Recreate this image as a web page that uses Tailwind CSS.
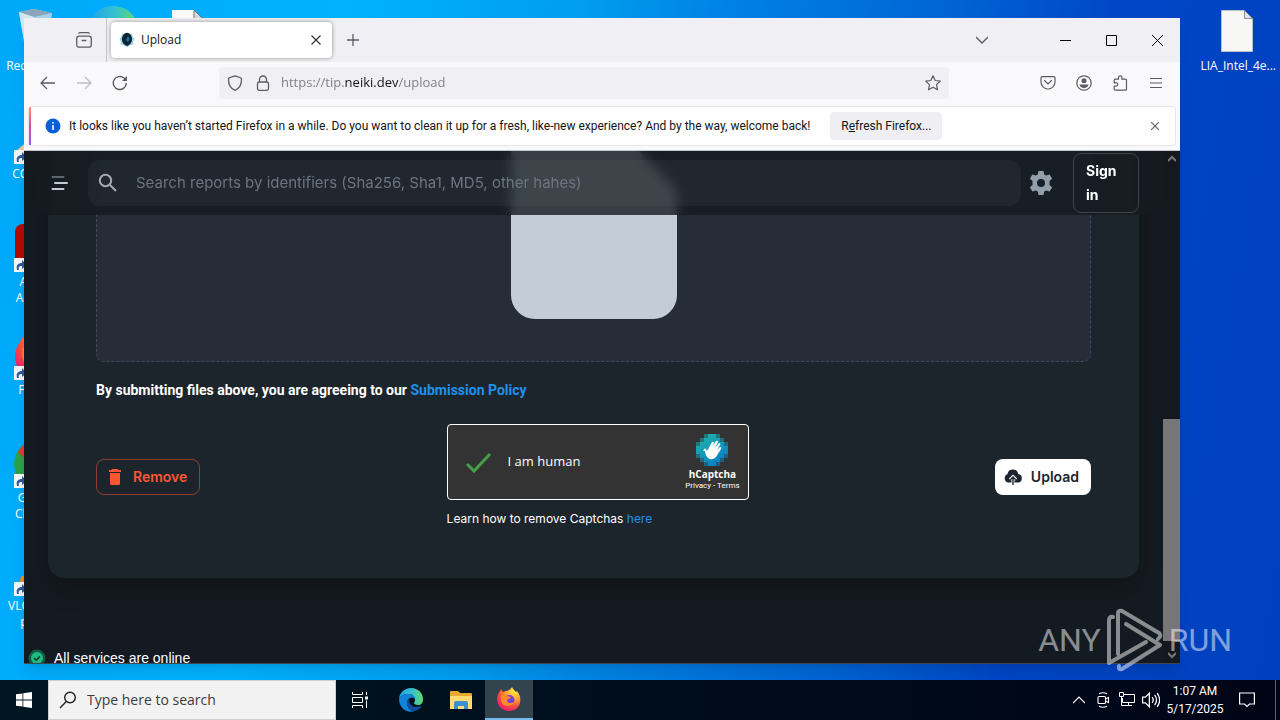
<!DOCTYPE html>
<html lang="en">
<head>
  <meta charset="UTF-8" />
  <meta name="viewport" content="width=device-width, initial-scale=1.0" />
  <title>Upload</title>
  <script src="https://cdn.jsdelivr.net/npm/@tailwindcss/browser@4"></script>
</head>
<body class="h-screen flex flex-col overflow-hidden font-['Open_Sans',sans-serif] text-xs">

  <!-- SHARED ICONS -->
  <svg class="absolute size-0" aria-hidden="true">
    <symbol id="shortcut" viewBox="0 0 14 14">
      <path d="M0 0h14v14H0z" fill="#f4f6f8" />
      <path d="M3 12C2 7 4 5 8 5V2l5 5-5 4V8C5 8 4 9 5 12z" fill="#2c5a9c" />
    </symbol>
    <symbol id="edge" viewBox="0 0 24 24">
      <linearGradient id="eg" x1="0" y1="0" x2="1" y2="0"><stop offset="0" stop-color="#1fa3e8" /><stop offset=".55" stop-color="#35c1d0" /><stop offset="1" stop-color="#5fdc6a" /></linearGradient>
      <path d="M12 0C5 0 .5 5 0 11c2-4 6-5 9-5 5 0 7 3 7 6 0 2-1 2-1 3 0 1 2 2 4 2 3 0 5-2 5-6C24 5 19 0 12 0z" fill="url(#eg)" />
      <path d="M0 11c2-4 6-5 9-5 4 0 6 2 7 5-2-2-8-2-8 4 0 5 4 8 8 8-8 3-16-3-16-12z" fill="#1283d8" />
      <path d="M8 15c0-3 1-4 2-5-1 4 2 9 7 9 2 0 4-1 5-1 1 0 0 1-1 2-2 2-4 3-6 3-4 0-7-3-7-8z" fill="#0f4f9e" />
    </symbol>
    <symbol id="firefox" viewBox="0 0 24 24">
      <radialGradient id="fg" cx=".75" cy=".15" r=".95"><stop offset="0" stop-color="#fff04a" /><stop offset=".4" stop-color="#ffa02e" /><stop offset=".7" stop-color="#ff4a3f" /><stop offset="1" stop-color="#e3197a" /></radialGradient>
      <path d="M15 0c1 2 2 3 4 5l1-1c3 4 4 7 3 12-1 5-6 8-11 8C5 24 0 19 0 12c0-3 1-5 3-8l1-2 2 3 3-1c1 0 4-1 6-4z" fill="url(#fg)" />
      <circle cx="12.500" cy="13" r="5" fill="#7a3fe0" />
      <path d="M4 8c2-2 5-1 6 1l4 1c0 1-2 2-4 3 0 3 4 4 7 2-2 4-5 4-7 4-4 0-7-4-6-11z" fill="#ff8a2b" />
    </symbol>
  </svg>

  <!-- DESKTOP -->
  <main class="relative flex-1 overflow-hidden bg-[linear-gradient(100deg,#00a8fa_0%,#00b2ff_25%,#009cf0_42%,#0082e4_52%,#0064d4_68%,#0046c6_80%,#0040be_100%)]">
    <ul class="absolute top-0 left-0 grid grid-cols-[repeat(3,75px)] auto-rows-[108px] text-center leading-4 text-white">
      <li class="col-start-1 flex flex-col items-center gap-0.5 pt-2">
        <svg class="size-12" viewBox="0 0 48 48"><path d="M5 4l15-3 18 4-4 40H12z" fill="#bfd9ea" fill-opacity=".85" /><path d="M5 4l15-3 18 4-18 4z" fill="#8aa6b8" /><path d="M5 4l15 5v36h-8z" fill="#e6f0f6" fill-opacity=".7" /></svg>
        <span>Recycle Bin</span>
      </li>
      <li class="flex flex-col items-center gap-0.5 pt-1.5"><svg class="size-12"><use href="#edge" /></svg><span>Edge</span></li>
      <li class="flex flex-col items-center gap-0.5 pt-2"><svg class="size-12" viewBox="0 0 48 48"><path d="M8 2h22l9 9v35H8z" fill="#fafafa" /><path d="M30 2l9 9h-9z" fill="#d4d8da" stroke="#777" /></svg><span>Report</span></li>
      <li class="col-start-1 flex flex-col items-center gap-0.5 pt-2">
        <svg class="size-12" viewBox="0 0 48 48"><circle cx="30" cy="22" r="20" fill="#c9322b" /><path d="M1 36l16-14 6 22H1z" fill="#f1cda0" /><use href="#shortcut" y="34" width="14" height="14" /></svg>
        <span>CCleaner</span>
      </li>
      <li class="col-start-1 flex flex-col items-center gap-0.5 pt-2">
        <svg class="size-12" viewBox="0 0 48 48"><rect x="1" width="46" height="46" rx="8" fill="#b30b00" /><use href="#shortcut" y="34" width="14" height="14" /></svg>
        <span>Adobe<br>Acrobat</span>
      </li>
      <li class="col-start-1 flex flex-col items-center gap-0.5 pt-2">
        <svg class="size-12" viewBox="0 0 48 48"><use href="#firefox" x="1" y="1" width="46" height="46" /><use href="#shortcut" y="34" width="14" height="14" /></svg>
        <span>Firefox</span>
      </li>
      <li class="col-start-1 flex flex-col items-center gap-0.5 pt-2">
        <svg class="size-12" viewBox="0 0 48 48"><circle cx="24" cy="24" r="24" fill="#2ba24c" /><path d="M4 12a23 23 0 0 1 40 0L24 24h-8z" fill="#e33b2e" /><use href="#shortcut" y="34" width="14" height="14" /></svg>
        <span>Google<br>Chrome</span>
      </li>
      <li class="col-start-1 flex flex-col items-center gap-0.5 pt-2">
        <svg class="size-12" viewBox="0 0 48 48"><path d="M24 2l12 32h8l3 12H3l4-18h6z" fill="#f08a2a" /><use href="#shortcut" y="34" width="14" height="14" /></svg>
        <span>VLC media<br>player</span>
      </li>
    </ul>
    <div class="absolute top-0 right-1 flex flex-col items-center gap-0.5 pt-2 text-center leading-4 text-white">
      <svg class="size-12" viewBox="0 0 48 48"><path d="M7.500 2.500h23l8 8v33h-31z" fill="#f7f8f6" stroke="#b9c0c6" /><path d="M30.500 2.500v8h8z" fill="#dfe4e6" stroke="#8b9196" /></svg>
      <span>LIA_Intel_4e...</span>
    </div>

    <!-- BROWSER WINDOW -->
    <section class="absolute top-[18px] right-[100px] bottom-4 left-6 flex flex-col overflow-hidden border-b border-[#3d474f] bg-[#f9f9fb] text-[#15141a] shadow-lg">
      <div class="flex h-11 shrink-0 items-center bg-[#f0f0f4] text-[#5b5b66]">
        <button aria-label="Firefox View" class="ml-12 flex h-full w-[35px] items-center border-r border-[#c5c5cc] pl-1">
          <svg class="size-4" viewBox="0 0 16 16" fill="none" stroke="currentColor" stroke-width="1.300"><rect x=".7" y="4.200" width="14.600" height="11" rx="2.500" /><path d="M2.500 1.500c.5-.8 1-.8 2-.8h7c1 0 1.500 0 2 .8M5.700 8.500h4.600" /></svg>
        </button>
        <div class="ml-1 flex h-9 w-[221px] items-center rounded bg-white px-2 shadow-[0_0_4px_rgba(0,0,0,0.4)]">
          <svg class="size-4" viewBox="0 0 16 16"><path d="M8 0l2 2 3-.5.5 3L15.500 7l-1.500 3 .5 2.500-3 .5L8 15.500 4.500 13l-3-.5L2 10 .5 7l2-2.500.5-3L6 2z" fill="#74bfdc" fill-opacity=".7" /><path d="M8 1c3 0 5 2.500 5 6.500 0 3-2 5.500-5 6.500-3-1-5-3.500-5-6.500C3 3.500 5 1 8 1z" fill="#0c2436" /><path d="M9 4l1.500 3L9 10 7 8z" fill="#1976a0" /></svg>
          <span class="ml-1.5 flex-1 text-[#15141a]">Upload</span>
          <button aria-label="Close tab" class="flex size-4 items-center justify-center"><svg class="size-2.5" viewBox="0 0 10 10" stroke="#2b2a33" stroke-width="1.100"><path d="M.5.5l9 9M9.500.5l-9 9" /></svg></button>
        </div>
        <button aria-label="New tab" class="ml-[15px]"><svg class="size-3" viewBox="0 0 12 12" stroke="currentColor" stroke-width="1.300"><path d="M6 0v12M0 6h12" /></svg></button>
        <button aria-label="List all tabs" class="mr-[42px] ml-auto flex w-9 justify-center"><svg class="size-3" viewBox="0 0 12 12" fill="none" stroke="currentColor" stroke-width="1.300"><path d="M0 3l6 6 6-6" /></svg></button>
        <button aria-label="Minimize" class="flex w-[46px] justify-center"><svg class="size-[11px]" viewBox="0 0 11 11" stroke="#000"><path d="M0 5.500h11" /></svg></button>
        <button aria-label="Maximize" class="flex w-[46px] justify-center"><svg class="size-[11px]" viewBox="0 0 11 11" fill="none" stroke="#000"><path d="M.5.500h10v10H.5z" /></svg></button>
        <button aria-label="Close" class="flex w-[46px] justify-center"><svg class="size-[11px]" viewBox="0 0 11 11" stroke="#000"><path d="M0 0l11 11M11 0L0 11" /></svg></button>
      </div>

      <div class="flex h-[42px] shrink-0 items-center pr-4 pl-4 text-[#5b5b66]">
        <button aria-label="Back" class="mr-5"><svg class="size-4" viewBox="0 0 16 16" fill="none" stroke="currentColor" stroke-width="1.300"><path d="M15 8H1.500M7 2L1 8l6 6" /></svg></button>
        <button aria-label="Forward" class="mr-5 text-[#bdbdc6]"><svg class="size-4" viewBox="0 0 16 16" fill="none" stroke="currentColor" stroke-width="1.300"><path d="M1 8h13.500M9 2l6 6-6 6" /></svg></button>
        <button aria-label="Reload"><svg class="size-4" viewBox="0 0 16 16" fill="none" stroke="currentColor" stroke-width="1.400"><path d="M14.300 8A6.500 6.500 0 1 1 12 3l2.500 2.500" /><path d="M15 1v5h-5z" fill="currentColor" stroke="none" /></svg></button>
        <div class="ml-[91px] flex h-8 w-[730px] items-center rounded bg-[#f0f0f4] px-2">
          <svg class="size-4" viewBox="0 0 16 16" fill="none" stroke="currentColor" stroke-width="1.300"><path d="M8 .8l6.300 2.200c.6 5-1 10-6.300 12.300C2.700 13 1.100 8 1.700 3z" stroke-linejoin="round" /></svg>
          <svg class="ml-3 size-4" viewBox="0 0 16 16" fill="none" stroke="currentColor" stroke-width="1.300"><rect x="2.500" y="7" width="11" height="8.300" rx="1.800" /><path d="M4.500 7V4.500a3.500 3.500 0 0 1 7 0V7" /></svg>
          <input aria-label="Address" value="https://tip.neiki.dev/upload" class="ml-2.5 flex-1 bg-[linear-gradient(to_right,#7b7b85_64px,#15141a_64px,#15141a_117px,#7b7b85_117px)] bg-clip-text text-[13px] text-transparent outline-none" />
          <button aria-label="Bookmark this page"><svg class="size-4" viewBox="0 0 16 16" fill="none" stroke="currentColor" stroke-width="1.200" stroke-linejoin="round"><path d="M8 .8l2.200 4.700 5.100.6-3.800 3.500 1 5.200L8 12.300l-4.500 2.500 1-5.200L.7 6.100l5.100-.6z" /></svg></button>
        </div>
        <div class="ml-auto flex items-center gap-5">
          <button aria-label="Pocket"><svg class="size-4" viewBox="0 0 16 16" fill="none" stroke="currentColor" stroke-width="1.200"><path d="M2.500 1.600h11a1.500 1.500 0 0 1 1.500 1.500V7A7 7 0 0 1 1 7V3.100a1.500 1.500 0 0 1 1.500-1.500z" /><path d="M4.500 5.500L8 9l3.500-3.500" stroke-linecap="round" /></svg></button>
          <button aria-label="Account"><svg class="size-4" viewBox="0 0 16 16"><circle cx="8" cy="8" r="7.200" fill="none" stroke="currentColor" stroke-width="1.200" /><circle cx="8" cy="5.700" r="2.500" fill="currentColor" /><path d="M3.500 9.500h9c-.4 2-2 3.500-4.500 3.500s-4.100-1.500-4.500-3.500z" fill="currentColor" /></svg></button>
          <button aria-label="Extensions"><svg class="size-4" viewBox="0 0 16 16" fill="none" stroke="currentColor" stroke-width="1.200" stroke-linejoin="round"><path d="M6.500 4.200V2.500a1.700 1.700 0 0 1 3.400 0v1.700h3.600q1 0 1 1v9q0 1-1 1H3.200q-1 0-1-1v-3.100h2a1.500 1.500 0 0 0 0-3.200h-2V5.200q0-1 1-1z" /></svg></button>
          <button aria-label="Open application menu"><svg class="size-4" viewBox="0 0 16 16" stroke="currentColor" stroke-width="1.200"><path d="M2 3.500h12M2 8h12M2 12.500h12" /></svg></button>
        </div>
      </div>

      <div class="mx-1 mt-0.5 mb-1 flex h-10 shrink-0 items-center rounded-sm border border-[#e6e6ea] bg-white font-[Roboto,sans-serif]">
        <span class="h-full w-0.5 bg-linear-to-b from-[#ff9466] via-[#e0499c] to-[#9059ff]"></span>
        <svg class="ml-3.5 size-4" viewBox="0 0 16 16"><circle cx="8" cy="8" r="7.500" fill="#0a5fd8" /><path d="M7.200 7h1.600v5H7.200zM7.200 4h1.600v1.600H7.200z" fill="#fff" /></svg>
        <p class="ml-2 whitespace-nowrap">It looks like you haven’t started Firefox in a while. Do you want to clean it up for a fresh, like-new experience? And by the way, welcome back!</p>
        <button class="ml-5 h-7 w-28 rounded bg-[#efeff3]">R<u>e</u>fresh Firefox...</button>
        <button aria-label="Dismiss" class="mr-4 ml-auto"><svg class="size-2" viewBox="0 0 8 8" stroke="#5b5b66" stroke-width="1.100"><path d="M0 0l8 8M8 0L0 8" /></svg></button>
      </div>

      <!-- PAGE -->
      <div class="flex min-h-0 flex-1 border-t border-[#c6c6cc] bg-[#141a21] font-[Inter,sans-serif] text-white">
        <div class="relative min-w-0 flex-1 overflow-hidden">
          <header class="absolute inset-x-0 top-0 z-10 flex h-16 items-center bg-[#141a21]/80 pr-6 pl-6 backdrop-blur-[6px]">
            <button aria-label="Menu" class="w-10 pl-0.5"><svg class="size-5" viewBox="0 0 20 20" fill="none" stroke-width="2" stroke-linecap="round"><path d="M2.500 4h11" stroke="#5d6670" /><path d="M5 10h12M2.500 16h11" stroke="#c4cdd5" /></svg></button>
            <label class="flex h-[46px] flex-1 items-center rounded-xl bg-[#919eab]/8 pl-2">
              <svg class="size-6" viewBox="0 0 24 24" fill="none" stroke="#a4acb4" stroke-width="2"><circle cx="9.500" cy="9.500" r="5.700" /><path d="M14 14l6 6" /></svg>
              <input type="search" aria-label="Search" placeholder="Search reports by identifiers (Sha256, Sha1, MD5, other hahes)" class="ml-4 flex-1 bg-transparent text-[15px] placeholder-[#6c7580] outline-none" />
            </label>
            <button aria-label="Settings" class="ml-2 flex w-11"><svg class="size-6" viewBox="0 0 24 24" fill="#919eab"><path fill-rule="evenodd" d="M9.500 0h5l.7 3.500 2 1.100L20.600 3.500l2.500 4.200-2.600 2.400v3.800l2.600 2.400-2.500 4.200-3.400-1.100-2 1.100-.7 3.500h-5l-.7-3.500-2-1.100-3.400 1.100L.9 16.300l2.600-2.400v-3.800L.9 7.700l2.500-4.200 3.400 1.100 2-1.100zM12 8a4 4 0 1 0 0 8 4 4 0 0 0 0-8z" /></svg></button>
            <button class="w-[66px] rounded-lg border border-[#919eab]/30 px-3 py-[5px] text-left text-sm leading-6 font-bold">Sign in</button>
          </header>

          <div class="mx-6 rounded-b-2xl bg-[#1c252c] px-12 pb-12 shadow-[0_12px_24px_rgba(0,0,0,0.2)]">
            <div class="flex justify-center rounded-b-lg border border-t-0 border-dashed border-[#919eab]/25 bg-[#262d38] pb-[42px]">
              <svg class="h-[168px] w-[166px]" viewBox="0 0 166 168"><path d="M0 0h128l33 34q5 5 5 12v98a24 24 0 0 1-24 24H24a24 24 0 0 1-24-24z" fill="#c4cdd5" /></svg>
            </div>
            <p class="mt-4 font-[Roboto,sans-serif] text-sm leading-6 font-bold">By submitting files above, you are agreeing to our <a href="#" class="text-[#2091ea]">Submission Policy</a></p>
            <div class="mt-[22px] flex items-center justify-between">
              <button class="flex h-9 items-center rounded-lg border border-[#ff5630]/50 pr-3 pl-2 text-sm font-semibold text-[#ff5630]">
                <svg class="mr-2 size-5" viewBox="0 0 20 20" fill="currentColor"><path d="M7.500 2h5l1 1H16v2H4V3h2.500zM5 6h10v10.500a1.500 1.500 0 0 1-1.500 1.500h-7A1.500 1.500 0 0 1 5 16.500z" /></svg>
                Remove
              </button>
              <div class="w-[302px]">
                <div class="flex h-[76px] items-center rounded border border-white bg-[#333] pr-2 pl-4 font-['Open_Sans',sans-serif]">
                  <label class="flex flex-1 items-center text-[13px]">
                    <span class="relative mr-4 size-7">
                      <input type="checkbox" checked class="block size-7 appearance-none" />
                      <svg class="pointer-events-none absolute inset-0 size-7" viewBox="0 0 28 28" fill="none" stroke="#43a047" stroke-width="3"><path d="M3 16l7 7L26 6" /></svg>
                    </span>
                    I am human
                  </label>
                  <div class="flex flex-col items-center">
                    <svg class="size-8" viewBox="0 0 32 32" shape-rendering="crispEdges">
                      <linearGradient id="hc" x1="0" y1="0" x2=".6" y2="1"><stop offset="0" stop-color="#1fb9aa" /><stop offset="1" stop-color="#0c7fc4" /></linearGradient>
                      <path d="M8 0h16v4h4v4h4v16h-4v4h-4v4H8v-4H4v-4H0V8h4V4h4z" fill="url(#hc)" fill-opacity=".55" />
                      <path d="M12 0h8v4h4v4h4v4h4v8h-4v4h-4v4h-4v4h-8v-4H8v-4H4v-4H0v-8h4V8h4V4h4z" fill="url(#hc)" />
                      <path d="M7 17l2-3 2 3L16 8q2-1 2 1l-2 4 4-6q2-1 2 1l-3 6 4-5q2 0 1 2l-3 5 3-3q2 0 1 2l-5 8q-4 4-8 1-3-3-3-7z" fill="#fff" shape-rendering="auto" />
                    </svg>
                    <span class="text-[10px] leading-4 font-bold">hCaptcha</span>
                    <span class="font-[Roboto,sans-serif] text-[8px] leading-2"><a href="#">Privacy</a> - <a href="#">Terms</a></span>
                  </div>
                </div>
                <p class="mt-2 text-xs leading-[22px]">Learn how to remove Captchas <a href="#" class="text-[#2091ea]">here</a></p>
              </div>
              <button class="flex h-9 items-center rounded-lg bg-white pr-3 pl-2 text-sm font-semibold text-[#1c252e]">
                <svg class="mr-2 size-5" viewBox="0 0 20 20" fill="currentColor"><path d="M6 15.500H5A4.500 4.500 0 0 1 4.500 7 5.500 5.500 0 0 1 15.300 7a4.300 4.300 0 0 1-.3 8.500h-1" /><path d="M10 17.500V10M7 12.500l3-3 3 3" fill="none" stroke="#fff" stroke-width="3" /><path d="M10 18v-7.500M7.300 12.700L10 10l2.700 2.700" fill="none" stroke="currentColor" stroke-width="1.400" /></svg>
                Upload
              </button>
            </div>
          </div>
          <footer class="mt-[72px] flex items-center gap-2 pl-1 font-['Liberation_Sans',sans-serif] text-sm leading-4">
            <svg class="-my-1 size-[18px]" viewBox="0 0 18 18"><circle cx="9" cy="9" r="8.500" fill="#0f5c43" /><circle cx="9" cy="9" r="6" fill="#20bb80" /><path d="M6 9l2.200 2.200L12 7.400" fill="none" stroke="#10382b" stroke-width="1.500" /></svg>
            All services are online
          </footer>
        </div>
        <div class="flex w-[17px] flex-col items-center bg-[#15191d]">
          <svg class="mt-1 size-2" viewBox="0 0 8 8" fill="none" stroke="#777" stroke-width="2"><path d="M0 6l4-4 4 4" /></svg>
          <div class="flex-1"></div>
          <div class="h-[222px] w-full bg-[#777]"></div>
          <svg class="mt-2.5 mb-1 size-2" viewBox="0 0 8 8" fill="none" stroke="#777" stroke-width="2"><path d="M0 2l4 4 4-4" /></svg>
        </div>
      </div>
    </section>

    <!-- WATERMARK -->
    <div class="pointer-events-none absolute right-12 bottom-2 flex items-center gap-1.5 font-[Roboto,sans-serif] text-[32px] leading-none text-white/50">
      <span>ANY</span>
      <svg class="h-16 w-14" viewBox="0 0 56 64" fill="none" stroke="currentColor" stroke-width="4" stroke-linejoin="round" stroke-linecap="round"><path d="M6 9q-4-1-4 4v42l37-21M11 46V5q0-3 4-2l37 22q3 3-1 6M19 16l34 21-38 24q-4 1-3-3" /></svg>
      <span>RUN</span>
    </div>
  </main>

  <!-- TASKBAR -->
  <nav class="flex h-10 shrink-0 items-stretch bg-linear-to-r from-[#001722] to-[#000516] text-white">
    <button aria-label="Start" class="flex w-12 items-center justify-center"><svg class="size-4" viewBox="0 0 16 16" fill="#fff"><path d="M0 2.300l6.500-.9v6.200H0zM7.300 1.300L16 0v7.600H7.300zM0 8.400h6.500v6.200L0 13.700zM7.300 8.400H16V16l-8.700-1.200z" /></svg></button>
    <label class="flex w-72 items-center border border-[#cfcfcf] bg-[#f2f2f2] pl-2.5">
      <svg class="size-[18px]" viewBox="0 0 18 18" fill="none" stroke="#222" stroke-width="1.400"><circle cx="11" cy="6.500" r="5.300" /><path d="M7.300 10.500L1 17" /></svg>
      <input type="text" aria-label="Search Windows" placeholder="Type here to search" class="ml-2.5 min-w-0 flex-1 bg-transparent text-sm text-black placeholder-[#3c3c3c] outline-none" />
    </label>
    <button aria-label="Task View" class="flex w-12 items-center justify-center"><svg class="size-4" viewBox="0 0 16 16" fill="none" stroke="#fff"><path d="M.5 0v2.500h10V0M.5 16v-2.500h10V16M.5 5.500h10v5H.5zM14.500 0v3M14.500 8.500V16" /><path d="M13 4.500h3v3h-3z" fill="#fff" stroke="none" /></svg></button>
    <button aria-label="Microsoft Edge" class="flex w-[53px] items-center justify-center"><svg class="size-6"><use href="#edge" /></svg></button>
    <button aria-label="File Explorer" class="flex w-12 items-center justify-center"><svg class="h-5 w-[22px]" viewBox="0 0 22 20"><path d="M0 2q0-1 1-1h7l2 2h11q1 0 1 1v14H0z" fill="#e8a92c" /><path d="M0 6h22v13H0z" fill="#ffdb70" /><path d="M4 19v-6q0-2 2-2h10q2 0 2 2v6h-4v-3H8v3z" fill="#3f8fd0" /></svg></button>
    <button aria-label="Firefox" class="flex w-12 items-center justify-center border-b-2 border-[#76b9ed] bg-[#33444f]"><svg class="size-6"><use href="#firefox" /></svg></button>
    <div class="ml-auto flex items-center">
      <button aria-label="Show hidden icons" class="flex w-6 justify-center"><svg class="size-3" viewBox="0 0 12 12" fill="none" stroke="#fff" stroke-width="1.200"><path d="M0 9l6-6 6 6" /></svg></button>
      <button aria-label="Meet Now" class="flex w-6 justify-center"><svg class="size-4" viewBox="0 0 16 16" fill="none" stroke="#fff" stroke-width="1.100"><rect x="3" y="4.500" width="7.500" height="7" rx="1" /><path d="M10.500 7l3-1.500v5l-3-1.500M4 1.800q4-2 8 0M4 14.200q4 2 8 0" /></svg></button>
      <button aria-label="Network" class="flex w-6 justify-center"><svg class="size-4" viewBox="0 0 16 16" fill="none" stroke="#fff"><path d="M5 2.500h10.500v8H3.500V6M9.500 10.500v3M6 13.500h7M.5.500h4v4h-4zM2.500 4.500v9H6" /></svg></button>
      <button aria-label="Volume" class="flex w-6 justify-center"><svg class="size-[18px]" viewBox="0 0 16 16" fill="none" stroke="#fff" stroke-width="1.100"><path d="M.5 5.500H3l3.500-3.500v12L3 10.500H.5zM9 5.500q2 2.500 0 5M11.200 3.500q3.400 4.500 0 9M13.500 1.800q4.300 6.200 0 12.400" /></svg></button>
      <time class="w-16 text-center font-[Roboto,sans-serif] leading-[18px]">1:07 AM<br>5/17/2025</time>
      <button aria-label="Notifications" class="mr-2 flex w-10 justify-center"><svg class="size-4" viewBox="0 0 16 16" fill="none" stroke="#fff" stroke-width="1.200"><path d="M.6 1h14.800v11H10.500L8 14.500 5.500 12H.6z" /></svg></button>
      <span class="mr-1 h-full w-px bg-[#5b636c]"></span>
    </div>
  </nav>
</body>
</html>
